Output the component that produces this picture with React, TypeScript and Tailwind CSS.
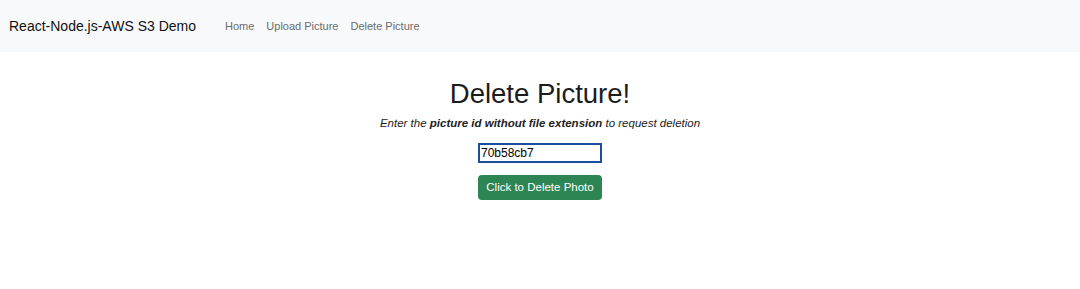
const font = { fontFamily: '"Liberation Sans", Arial, sans-serif' };

const links = ["Home", "Upload Picture", "Delete Picture"];

export default function App() {
  return (
    <div className="h-[289px] w-[1080px] bg-white text-[#212529]" style={font}>
      <nav className="flex h-[52px] items-center bg-[#f8f9fa] pl-[9px]">
        <span className="text-[14px] text-[#111]">React-Node.js-AWS S3 Demo</span>
        <div className="ml-[29px] flex gap-[12px] text-[11px] text-[#6c6c6c]">
          {links.map((l) => (
            <a key={l} href="#">
              {l}
            </a>
          ))}
        </div>
      </nav>
      <main className="flex flex-col items-center">
        <h1 className="mt-[25px] text-[27.5px] leading-[34px] text-[#1c1c1c]">Delete Picture!</h1>
        <p className="mt-[4px] text-[11.5px] italic text-[#222]">
          Enter the <b>picture id without file extension</b> to request deletion
        </p>
        <input
          defaultValue="70b58cb7"
          className="mt-[11px] h-[20px] w-[124px] border-2 border-[#1a4fa0] px-[1px] text-[12px] text-black outline-none"
          style={font}
        />
        <button className="mt-[12px] h-[25px] w-[124px] rounded-[4px] bg-[#2e8554] text-[11.5px] text-white">
          Click to Delete Photo
        </button>
      </main>
    </div>
  );
}
